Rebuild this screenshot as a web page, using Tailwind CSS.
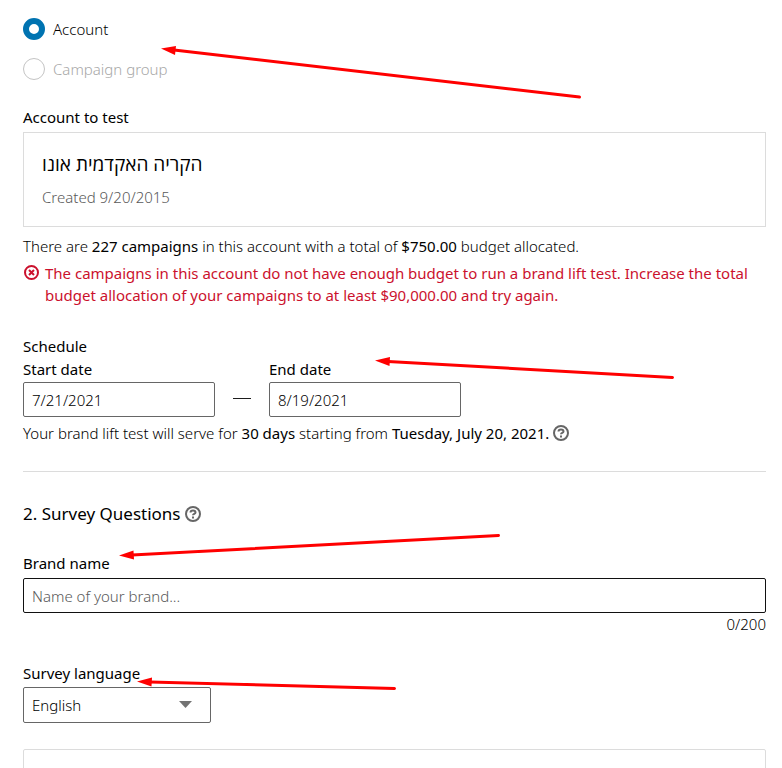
<!DOCTYPE html>
<html lang="en">
<head>
<meta charset="utf-8">
<meta name="viewport" content="width=device-width, initial-scale=1">
<title>Brand lift test</title>
<script src="https://cdn.jsdelivr.net/npm/@tailwindcss/browser@4"></script>
</head>
<body class="bg-white">
<main class="relative h-screen overflow-hidden pl-[23px] pr-4 pt-[18px] font-['Noto_Sans','Open_Sans','DejaVu_Sans',sans-serif] text-[15px] leading-[22px] font-light text-black">
  <form>
    <fieldset class="flex flex-col gap-[18px]">
      <label class="flex items-center gap-2">
        <input type="radio" name="scope" checked class="size-[22px] appearance-none rounded-full border border-[#c4c4c4] bg-white checked:border-[6px] checked:border-[#0073b1]">
        <span>Account</span>
      </label>
      <label class="flex items-center gap-2">
        <input type="radio" name="scope" disabled class="size-[22px] appearance-none rounded-full border border-[#c4c4c4] bg-white checked:border-[6px] checked:border-[#0073b1]">
        <span class="text-[#a8a8a8]">Campaign group</span>
      </label>
    </fieldset>

    <section>
      <h3 class="mt-[26px] font-normal">Account to test</h3>
      <div class="mt-1 border border-[#dcdcdc] px-[18px] pt-[17px] pb-[18px]">
        <p class="text-[19px] leading-7 font-normal"><bdi lang="he">הקריה האקדמית אונו</bdi></p>
        <p class="mt-2 text-[#595959]">Created 9/20/2015</p>
      </div>
      <p class="mt-2">There are <b class="font-normal">227 campaigns</b> in this account with a total of <b class="font-normal">$750.00</b> budget allocated.</p>
      <div role="alert" class="mt-[5px] flex gap-[6px] font-normal text-[#cb112d]">
        <svg class="mt-[3px] size-4 shrink-0" viewBox="0 0 16 16" fill="none" stroke="currentColor" stroke-width="2" aria-hidden="true"><circle cx="8.500" cy="7.500" r="6.500"/><path d="M6 5l5 5m0-5l-5 5"/></svg>
        <p>The campaigns in this account do not have enough budget to run a brand lift test. Increase the total budget allocation of your campaigns to at least $90,000.00 and try again.</p>
      </div>
    </section>

    <section class="mt-[29px]">
      <h3 class="font-normal">Schedule</h3>
      <div class="mt-px flex items-end">
        <div class="w-48">
          <label for="start" class="block font-normal">Start date</label>
          <input id="start" type="text" value="7/21/2021" class="mt-[2px] block h-[35px] w-full rounded-xs border border-[#666] px-2">
        </div>
        <span class="mx-[18px] mb-[18px] h-px w-[18px] bg-[#1d1d1d]"></span>
        <div class="w-48">
          <label for="end" class="block font-normal">End date</label>
          <input id="end" type="text" value="8/19/2021" class="mt-[2px] block h-[35px] w-full rounded-xs border border-[#666] px-2">
        </div>
      </div>
      <div class="mt-[5px] flex items-center gap-1">
        <p>Your brand lift test will serve for <b class="font-normal">30 days</b> starting from <b class="font-normal">Tuesday, July 20, 2021.</b></p>
        <button type="button" aria-label="Schedule help" class="text-[#666]">
          <svg class="size-4" viewBox="0 0 16 16" fill="none" stroke="currentColor" stroke-width="2"><circle cx="8" cy="8" r="7"/><path d="M5.500 6.500C5.500 3.800 10.500 3.900 10.500 6.400C10.500 8 8 7.700 8 9.300"/><path d="M8 10.500v2"/></svg>
        </button>
      </div>
    </section>

    <hr class="mt-[27px] border-[#dcdcdc]">

    <section>
      <div class="mt-[31px] flex items-center gap-1">
        <h2 class="text-[17px] leading-[22px] font-normal">2. Survey Questions</h2>
        <button type="button" aria-label="Survey questions help" class="text-[#666]">
          <svg class="size-4" viewBox="0 0 16 16" fill="none" stroke="currentColor" stroke-width="2"><circle cx="8" cy="8" r="7"/><path d="M5.500 6.500C5.500 3.800 10.500 3.900 10.500 6.400C10.500 8 8 7.700 8 9.300"/><path d="M8 10.500v2"/></svg>
        </button>
      </div>
      <label for="brand" class="mt-[27px] block font-normal">Brand name</label>
      <input id="brand" type="text" maxlength="200" placeholder="Name of your brand..." class="mt-1 block h-[35px] w-full rounded-xs border border-[#111] px-2 placeholder:text-[#595959]">
      <p class="text-right">0/200</p>

      <label for="lang" class="mt-[27px] block font-normal">Survey language</label>
      <div class="relative mt-[3px] w-47">
        <select id="lang" class="block h-9 w-full appearance-none rounded-xs border border-[#666] px-2"><option>English</option></select>
        <svg class="pointer-events-none absolute top-[14px] right-[19px] h-[7px] w-[13px] text-[#737373]" viewBox="0 0 13 7" fill="currentColor" aria-hidden="true"><path d="M0 0h13L6.500 7z"/></svg>
      </div>
    </section>
    <section class="mt-[26px] h-24 rounded-xs border border-[#dcdcdc]"></section>
  </form>

  <svg class="pointer-events-none absolute top-0 left-0 h-[768px] w-[782px]" viewBox="0 0 782 768" fill="#f00" stroke="#f00" stroke-width="3" stroke-linecap="round" aria-hidden="true">
    <path d="M174 50L579.500 97"/><path stroke="none" d="M161 48.500L176 46L175 55z"/>
    <path d="M388 361.500L672.500 377.500"/><path stroke="none" d="M375 360.500L390 357L389.500 366z"/>
    <path d="M132 555L498.500 535.500"/><path stroke="none" d="M119 555.500L133.500 550.500L134 559.500z"/>
    <path d="M150 682L394.500 688.500"/><path stroke="none" d="M137 681.500L152 677.500L151.500 686.500z"/>
  </svg>
</main>
</body>
</html>
